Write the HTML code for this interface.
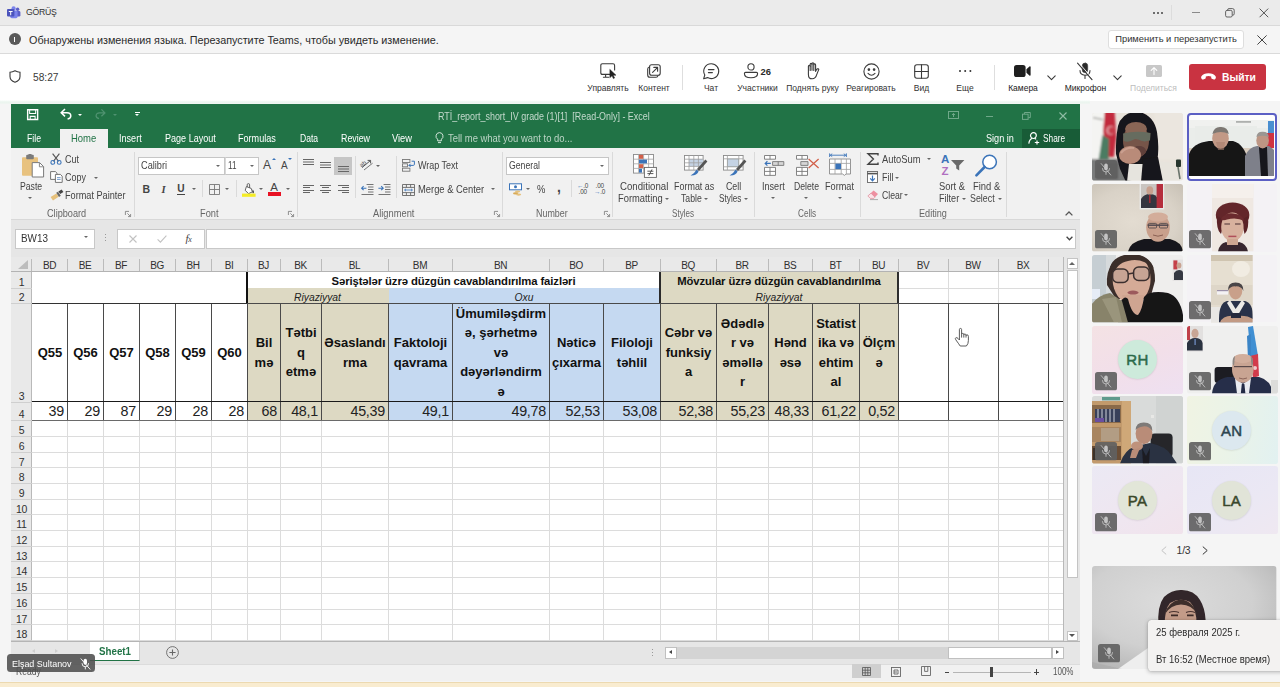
<!DOCTYPE html>
<html><head><meta charset="utf-8">
<style>
*{box-sizing:border-box;margin:0;padding:0}
html,body{width:1280px;height:687px;overflow:hidden;background:#f5f5f5;font-family:"Liberation Sans",sans-serif;}
.a{position:absolute}
svg{display:block;overflow:visible}
/* grid text */
.ch{font-size:10px;color:#303030;text-align:center;line-height:14px;letter-spacing:-0.35px}
.rh{font-size:10.5px;color:#303030;text-align:center;line-height:14px;letter-spacing:-0.3px}
.t1{font-size:11.3px;font-weight:bold;color:#111;text-align:center;line-height:15px;white-space:nowrap;letter-spacing:-0.1px}
.t2{font-size:10.3px;font-style:italic;color:#222;text-align:center;line-height:14px;white-space:nowrap}
.h3{display:flex;align-items:center;justify-content:center;text-align:center;font-weight:bold;font-size:13px;line-height:19.5px;color:#111;white-space:nowrap;overflow:hidden}
.v4{font-size:14.3px;letter-spacing:-0.25px;color:#222;text-align:right;line-height:17px;white-space:nowrap}
</style></head><body>
<div class="a" style="left:0;top:0;width:1280px;height:26px;background:#ebebeb;border-bottom:1px solid #d9d9d9"></div>
<div class="a" style="left:0;top:26px;width:1280px;height:28px;background:#f5f5f5;border-bottom:1px solid #dadada"></div>
<div class="a" style="left:0;top:54px;width:1280px;height:47px;background:#fff"></div>
<div class="a" style="left:0;top:101px;width:1280px;height:586px;background:#f5f5f5"></div>
<div class="a" style="left:0;top:100px;width:1090px;height:4px;background:linear-gradient(#fff,#eaf4ee 50%,#f1f5f2)"></div>
<!-- title bar -->
<svg class="a" style="left:7px;top:6px" width="14" height="13" viewBox="0 0 14 13">
 <circle cx="10.6" cy="3.2" r="1.7" fill="#5b5fc7"/><rect x="8.4" y="5" width="5" height="5.6" rx="1.4" fill="#5b5fc7"/>
 <circle cx="6.6" cy="2.4" r="2.1" fill="#7b83eb"/><rect x="3.2" y="4.6" width="7.4" height="7.6" rx="1.6" fill="#7b83eb"/>
 <rect x="0" y="3" width="7.4" height="7.6" rx="1" fill="#4b53bc"/>
 <path d="M1.8 5H5.6V6H4.2V9.2H3.2V6H1.8Z" fill="#fff"/>
</svg>
<div class="a" style="left:26px;top:7px;font-size:8.7px;color:#333;line-height:11px;letter-spacing:-0.25px;white-space:nowrap">GÖRÜŞ</div>
<div class="a" style="left:1153px;top:11.5px;width:2px;height:2px;border-radius:1px;background:#444;box-shadow:4px 0 #444,8px 0 #444"></div>
<div class="a" style="left:1171px;top:5px;width:1px;height:15px;background:#dcdcdc"></div>
<div class="a" style="left:1192px;top:11.5px;width:8px;height:1px;background:#8a8a8a"></div>
<svg class="a" style="left:1225px;top:8px" width="10" height="10" viewBox="0 0 10 10" fill="none" stroke="#555" stroke-width="0.9"><rect x="0.6" y="2.4" width="6.6" height="6.6" rx="1.4"/><path d="M2.6 2.4V2Q2.6 .6 4 .6H7.6Q9.2 .6 9.2 2.2V5.8Q9.2 7.2 7.8 7.2H7.2"/></svg>
<svg class="a" style="left:1259px;top:8px" width="10" height="10" viewBox="0 0 10 10" stroke="#444" stroke-width="0.9"><path d="M.6 .6L9.2 9.2M9.2 .6L.6 9.2"/></svg>
<!-- notification bar -->
<div class="a" style="left:8.6px;top:33.3px;width:12.2px;height:12.2px;border-radius:50%;background:#5a5a5a"></div>
<div class="a" style="left:14.2px;top:36.6px;width:1.1px;height:5.8px;background:#fff"></div>
<div class="a" style="left:29px;top:33px;font-size:10.8px;color:#2b2b2b;line-height:14px;white-space:nowrap">Обнаружены изменения языка. Перезапустите Teams, чтобы увидеть изменение.</div>
<div class="a" style="left:1108px;top:30px;width:136px;height:19px;background:#fff;border:1px solid #dedede;border-radius:3px;font-size:9.35px;color:#333;text-align:center;line-height:17px;white-space:nowrap">Применить и перезапустить</div>
<svg class="a" style="left:1257px;top:35px" width="10" height="10" viewBox="0 0 10 10" stroke="#444" stroke-width="1"><path d="M.4 .4L9.6 9.6M9.6 .4L.4 9.6"/></svg>
<!-- meeting toolbar -->
<svg class="a" style="left:9px;top:70px" width="12" height="13" viewBox="0 0 12 13" fill="none" stroke="#3a3a3a" stroke-width="1.1"><path d="M6 .8Q3.6 2.2 1 2.2V6.4Q1 10.4 6 12.2Q11 10.4 11 6.4V2.2Q8.4 2.2 6 .8Z"/></svg>
<div class="a" style="left:33px;top:70.8px;font-size:10.2px;color:#3a3a3a;line-height:13px;white-space:nowrap">58:27</div>
<style>.tl{position:absolute;top:83.2px;width:80px;margin-left:-40px;text-align:center;font-size:8.5px;line-height:11px;color:#333;white-space:nowrap}
.ti{position:absolute;fill:none;stroke:#3a3a3a;stroke-width:1.1;stroke-linecap:round;stroke-linejoin:round}</style>
<div class="tl" style="left:608px">Управлять</div>
<div class="tl" style="left:654px">Контент</div>
<div class="tl" style="left:711px">Чат</div>
<div class="tl" style="left:757.5px">Участники</div>
<div class="tl" style="left:812.5px">Поднять руку</div>
<div class="tl" style="left:871px">Реагировать</div>
<div class="tl" style="left:921.5px">Вид</div>
<div class="tl" style="left:965px">Еще</div>
<div class="tl" style="left:1023px;color:#222">Камера</div>
<div class="tl" style="left:1085.5px;color:#222">Микрофон</div>
<div class="tl" style="left:1153.5px;color:#bdbdbd">Поделиться</div>
<div class="a" style="left:682px;top:65px;width:1px;height:25px;background:#dedede"></div>
<div class="a" style="left:994px;top:65px;width:1px;height:25px;background:#dedede"></div>
<!-- manage: monitor + cursor -->
<svg class="ti" style="left:600px;top:63px" width="17" height="16" viewBox="0 0 17 16"><path d="M9.6 11.4H2.4Q.8 11.4 .8 9.8V2.4Q.8 .8 2.4 .8H13Q14.6 .8 14.6 2.4V7"/><path d="M5.6 11.6V14M3.4 14.2H8.6"/><path d="M10 6.6L16 12.2H13.2L14.6 15L13.4 15.6L12 12.8L10 14.6Z" fill="#222" stroke="#222" stroke-width=".5"/></svg>
<!-- content -->
<svg class="ti" style="left:647px;top:64px" width="14" height="14" viewBox="0 0 14 14"><rect x="2.6" y=".7" width="10.6" height="10.6" rx="2"/><path d="M2.4 3Q.7 3.4 .7 5V11Q.7 13.3 3 13.3H9Q10.6 13.3 11 11.6"/><path d="M5.6 8.4L10.4 3.6M6.8 3.4H10.6V7.2"/></svg>
<!-- chat -->
<svg class="ti" style="left:702px;top:63px" width="18" height="17" viewBox="0 0 18 17"><path d="M9.2 .8A7.4 7.4 0 1 1 5.6 14.6L1.6 15.8L2.8 12A7.4 7.4 0 0 1 9.2 .8Z"/><path d="M6.4 6.6H12M6.4 9.6H10.4"/></svg>
<!-- people -->
<svg class="ti" style="left:743px;top:63px" width="16" height="16" viewBox="0 0 16 16"><circle cx="8" cy="3.9" r="3.1"/><path d="M2.6 9.4H13.4Q14.6 9.4 14.6 10.6Q14.6 14.8 8 14.8Q1.4 14.8 1.4 10.6Q1.4 9.4 2.6 9.4Z"/></svg>
<div class="a" style="left:760.5px;top:65.5px;font-size:9.4px;font-weight:bold;color:#2a2a2a;line-height:11px">26</div>
<!-- hand -->
<svg class="ti" style="left:805px;top:62px" width="15" height="18" viewBox="0 0 15 18"><path d="M3.4 10.6V4.2Q3.4 3.2 4.3 3.2Q5.2 3.2 5.2 4.2V2.2Q5.2 1.2 6.1 1.2Q7 1.2 7 2.2V1.8Q7 .8 7.9 .8Q8.8 .8 8.8 1.8V2.8Q8.8 1.9 9.7 1.9Q10.6 1.9 10.6 2.9V9.4Q11.2 7.6 12.4 6.8Q13.6 6.4 13.8 7.4L11.8 12.4Q10.6 16.8 7.2 16.8Q3.4 16.8 3.4 12.4Z"/><path d="M5.2 4V8.4M7 2V8.2M8.8 2.8V8.4"/></svg>
<!-- smiley -->
<svg class="ti" style="left:862.5px;top:63px" width="17" height="17" viewBox="0 0 17 17"><circle cx="8.5" cy="8.5" r="7.6"/><circle cx="5.9" cy="6.6" r=".8" fill="#3a3a3a"/><circle cx="11.1" cy="6.6" r=".8" fill="#3a3a3a"/><path d="M5 10.4Q8.5 14 12 10.4"/></svg>
<!-- view grid -->
<svg class="ti" style="left:914px;top:64px" width="15" height="15" viewBox="0 0 15 15"><rect x=".7" y=".7" width="13.6" height="13.6" rx="2.2"/><path d="M7.5 .8V14.2M.8 7.5H14.2"/></svg>
<!-- more -->
<div class="a" style="left:958.5px;top:69.5px;width:2.4px;height:2.4px;border-radius:50%;background:#333;box-shadow:5.2px 0 #333,10.4px 0 #333"></div>
<!-- camera -->
<svg class="a" style="left:1014px;top:65px" width="17" height="12" viewBox="0 0 17 12"><rect x="0" y="0" width="11.6" height="12" rx="2.6" fill="#1f1f1f"/><path d="M12.4 4.2L15.4 1.6Q16.6 .9 16.6 2.2V9.8Q16.6 11.1 15.4 10.4L12.4 7.8Z" fill="#1f1f1f"/></svg>
<svg class="ti" style="left:1046.5px;top:74.5px" width="9" height="6" viewBox="0 0 9 6" stroke-width="1"><path d="M.8 .8L4.5 4.6L8.2 .8"/></svg>
<!-- mic muted -->
<svg class="ti" style="left:1076px;top:62px" width="18" height="19" viewBox="0 0 18 19" stroke="#2a2a2a"><rect x="6.3" y="1" width="5.4" height="9.6" rx="2.7" fill="#2a2a2a" stroke-width=".6"/><path d="M4 8.6Q4 13.2 9 13.2Q14 13.2 14 8.6M9 13.4V16.4"/><path d="M1.6 1.2L16 17.6" stroke-width="1.2"/><path d="M2.6 .6L17 17" stroke="#fff" stroke-width=".9"/></svg>
<svg class="ti" style="left:1113px;top:74.5px" width="9" height="6" viewBox="0 0 9 6" stroke-width="1"><path d="M.8 .8L4.5 4.6L8.2 .8"/></svg>
<!-- share disabled -->
<svg class="a" style="left:1145.5px;top:65px" width="16" height="12" viewBox="0 0 16 12"><rect width="16" height="12" rx="1.6" fill="#c8c8c8"/><path d="M8 9.6V3M5.2 5.4L8 2.6L10.8 5.4" fill="none" stroke="#fff" stroke-width="1.1" stroke-linecap="round" stroke-linejoin="round"/></svg>
<!-- leave -->
<div class="a" style="left:1188.5px;top:64px;width:77px;height:26px;border-radius:3px;background:#c93341"></div>
<svg class="a" style="left:1201px;top:73px" width="15" height="7" viewBox="0 0 15 7"><path d="M7.5 .3Q12.6 .3 14.6 3.2Q15.2 4.4 14.6 5.4L14 6.2Q13.6 6.7 12.8 6.4L10.8 5.7Q10.2 5.4 10.2 4.6V3.5Q7.5 2.7 4.8 3.5V4.6Q4.8 5.4 4.2 5.7L2.2 6.4Q1.4 6.7 1 6.2L.4 5.4Q-.2 4.4 .4 3.2Q2.4 .3 7.5 .3Z" fill="#fff"/></svg>
<div class="a" style="left:1222px;top:70.5px;font-size:10.3px;font-weight:bold;color:#fff;line-height:13px;white-space:nowrap">Выйти</div>
<style>.rt{line-height:13px;white-space:pre;transform-origin:0 50%}
.sep{position:absolute;width:1px;background:#dadada}
.dd{position:absolute;width:0;height:0;border-left:2.4px solid transparent;border-right:2.4px solid transparent;border-top:2.6px solid #666}
.ln{position:absolute;width:6px;height:6px}
.xi{position:absolute;overflow:visible}
</style>
<div class="a" style="left:11px;top:104px;width:1069px;height:44px;background:#217346"></div>
<div class="a" style="left:60px;top:129px;width:48px;height:19px;background:#f1f1f1"></div>
<div class="a" style="left:1022px;top:129px;width:58px;height:19px;background:#185c37"></div>
<div class="a" style="left:11px;top:148px;width:1069px;height:72px;background:#f1f1f1;border-bottom:1px solid #d8d8d8"></div>
<div class="a" style="left:11px;top:220px;width:1069px;height:37px;background:#e6e6e6"></div>
<!-- quick access -->
<svg class="xi" style="left:26.7px;top:108.8px" width="11.3" height="11.2" viewBox="0 0 12 11" preserveAspectRatio="none" fill="none" stroke="#fff" stroke-width="1.5"><path d="M.7 .7H11.3V10.3H.7Z"/><path d="M2.8 .8V4.4H9.2V.8M3.4 10V7.2H8.6V10" stroke-width="1.1"/></svg>
<svg class="xi" style="left:60px;top:107.8px" width="12" height="12" viewBox="0 0 12 12" fill="none" stroke="#fff" stroke-width="1.5"><path d="M5 1L1.2 4.8L5 8.4M1.6 4.8H7Q10.8 4.8 10.8 8Q10.8 10.4 7.6 11"/></svg>
<div class="dd" style="left:78px;top:114px;border-top-color:#fff"></div>
<svg class="xi" style="left:95px;top:107.8px" width="11" height="12" viewBox="0 0 12 12" fill="none" stroke="#4f9270" stroke-width="1.4"><path d="M7 1L10.8 4.8L7 8.4M10.4 4.8H5Q1.2 4.8 1.2 8Q1.2 10.4 4.4 11"/></svg>
<div class="dd" style="left:112.5px;top:114px;border-top-color:#4f9270"></div>
<div class="a" style="left:134.5px;top:111.5px;width:5px;height:1.2px;background:#fff"></div>
<div class="dd" style="left:134.6px;top:114.4px;border-top-color:#fff"></div>
<!-- lightbulb -->
<svg class="xi" style="left:435px;top:132px" width="9" height="12" viewBox="0 0 9 12" fill="none" stroke="#d5e6dc" stroke-width="1"><path d="M4.5 .6A3.6 3.6 0 0 1 6.4 7.2V8.8H2.6V7.2A3.6 3.6 0 0 1 4.5 .6ZM3 10.6H6"/></svg>
<!-- window controls -->
<svg class="xi" style="left:948px;top:111px" width="11" height="8" viewBox="0 0 11 8" fill="none" stroke="#6fa889" stroke-width="1"><rect x=".5" y=".5" width="10" height="7"/><path d="M5.5 6V2.6M4 4L5.5 2.4L7 4"/></svg>
<div class="a" style="left:986px;top:116px;width:7px;height:1px;background:#6fa889"></div>
<svg class="xi" style="left:1022px;top:111.5px" width="9" height="8" viewBox="0 0 9 8" fill="none" stroke="#6fa889" stroke-width="1"><rect x=".5" y="2.2" width="5.6" height="5.2"/><path d="M2.4 2V.5H8.3V5.6H6.4"/></svg>
<svg class="xi" style="left:1058.5px;top:112px" width="8" height="8" viewBox="0 0 8 8" stroke="#8fbda5" stroke-width="1.1"><path d="M.5 .5L7.5 7.5M7.5 .5L.5 7.5"/></svg>
<!-- share icon -->
<svg class="xi" style="left:1027.5px;top:132px" width="12" height="13" viewBox="0 0 12 13" fill="none" stroke="#fff" stroke-width="1.2"><circle cx="5.4" cy="3.6" r="2.9"/><path d="M.8 11.6Q1.4 7.4 4.2 6.4M6.6 6.4Q7.6 6.8 8 7.4M9 8.4V12.6M6.8 10.5H11.2"/></svg>
<!-- group separators -->
<div class="sep" style="left:134px;top:152px;height:65px"></div>
<div class="sep" style="left:297px;top:152px;height:65px"></div>
<div class="sep" style="left:502px;top:152px;height:65px"></div>
<div class="sep" style="left:612px;top:152px;height:65px"></div>
<div class="sep" style="left:754px;top:152px;height:65px"></div>
<div class="sep" style="left:860px;top:152px;height:65px"></div>
<div class="sep" style="left:1006px;top:152px;height:65px"></div>
<div class="sep" style="left:202px;top:180px;height:17px"></div>
<div class="sep" style="left:236px;top:180px;height:17px"></div>
<div class="sep" style="left:355px;top:156px;height:42px"></div>
<div class="sep" style="left:396px;top:156px;height:42px"></div>
<div class="sep" style="left:571px;top:180px;height:17px"></div>
<!-- CLIPBOARD -->
<svg class="xi" style="left:20.5px;top:154px" width="24" height="24" viewBox="0 0 24 24">
 <rect x="1" y="3.2" width="16" height="18.6" rx="1" fill="#e8c27f"/><rect x="5.2" y=".8" width="7.6" height="4.4" rx="1" fill="#7b7b7b"/><rect x="7.2" y="0" width="3.6" height="2" rx="1" fill="#7b7b7b"/>
 <path d="M11.2 8.6H18.6L22.6 12.6V23H11.2Z" fill="#fff" stroke="#7a7a7a" stroke-width="1"/><path d="M18.4 8.8V12.8H22.4" fill="none" stroke="#7a7a7a" stroke-width=".9"/>
</svg>
<div class="dd" style="left:28px;top:197px"></div>
<svg class="xi" style="left:50px;top:153px" width="12" height="12" viewBox="0 0 12 12" fill="none" stroke-width="1.1"><path d="M2.6 .6L8.6 8.4M9.4 .6L3.4 8.4" stroke="#555"/><circle cx="2.8" cy="9.4" r="1.9" stroke="#3b74b9"/><circle cx="9.2" cy="9.4" r="1.9" stroke="#3b74b9"/></svg>
<svg class="xi" style="left:49.5px;top:171px" width="13" height="12" viewBox="0 0 13 12" fill="#fff" stroke="#666" stroke-width=".9"><path d="M.6 .6H5.4L7 2.2V8.4H.6Z"/><path d="M5.4 3.4H10.4L12.2 5.2V11.4H5.4Z"/><path d="M7 6.6H10.6M7 8.4H10.6" stroke="#3b74b9" stroke-width=".7"/></svg>
<div class="dd" style="left:94px;top:176.5px"></div>
<svg class="xi" style="left:50px;top:189px" width="14" height="12" viewBox="0 0 14 12"><path d="M.6 8L6.4 4.4L8.6 7.8L3 11.6Z" fill="#e6c17c"/><path d="M6.2 3.8L8 2.8L10.8 6.8L9 8Z" fill="#666"/><path d="M8.4 2.4L11.6 .4L13.4 3L10.2 5Z" fill="#444"/></svg>
<svg class="ln" style="left:125px;top:211px" viewBox="0 0 6 6" fill="none" stroke="#777" stroke-width=".8"><path d="M.4 4V.4H4M2.4 2.4L5.4 5.4M5.6 3V5.6H3"/></svg>
<!-- FONT -->
<div class="a" style="left:138px;top:156.5px;width:87px;height:18px;background:#fff;border:1px solid #c6c6c6"></div>
<div class="a" style="left:225px;top:156.5px;width:34px;height:18px;background:#fff;border:1px solid #c6c6c6;border-left:1px solid #d8d8d8"></div>
<div class="dd" style="left:216px;top:164.5px"></div><div class="dd" style="left:250px;top:164.5px"></div>
<div class="a" style="left:263px;top:157.5px;font-size:12px;color:#444;line-height:14px">A</div><div class="a" style="left:271.5px;top:158px;width:0;height:0;border-left:2px solid transparent;border-right:2px solid transparent;border-bottom:2.6px solid #3b74b9"></div>
<div class="a" style="left:281px;top:159.5px;font-size:10px;color:#444;line-height:12px">A</div><div class="a" style="left:288px;top:158px;width:0;height:0;border-left:2px solid transparent;border-right:2px solid transparent;border-top:2.6px solid #3b74b9"></div>
<div class="a" style="left:142.5px;top:182.5px;font-size:10.5px;font-weight:bold;color:#444;line-height:13px">B</div>
<div class="a" style="left:161.5px;top:182.5px;font-size:10.5px;font-weight:bold;font-style:italic;font-family:'Liberation Serif',serif;color:#444;line-height:13px">I</div>
<div class="a" style="left:177.2px;top:182.3px;font-size:10.2px;font-weight:bold;color:#444;line-height:13px;border-bottom:1px solid #444;height:12.4px">U</div>
<div class="dd" style="left:191.6px;top:188px"></div>
<svg class="xi" style="left:209px;top:183.5px" width="11" height="11" viewBox="0 0 11 11" fill="none" stroke="#777" stroke-width=".9"><path d="M.5 .5H10.5V10.5H.5ZM5.5 .5V10.5M.5 5.5H10.5"/></svg>
<div class="dd" style="left:225.2px;top:188px"></div>
<svg class="xi" style="left:241.5px;top:182.5px" width="14" height="14" viewBox="0 0 14 14"><path d="M4.4 3.6L9.2 5.4L10.4 8.8L6.6 10.6L3.2 7.4Z" fill="#fff" stroke="#555" stroke-width=".9"/><path d="M5.2 4V1.8Q5.2 .6 6.4 .6Q7.6 .6 7.6 1.8V4.8" fill="none" stroke="#555" stroke-width=".9"/><path d="M10.8 6.6Q12.6 8.6 12 9.8Q11.2 10.8 10.4 9.8Q10 8.6 10.8 6.6Z" fill="#555"/><rect x="0" y="10.6" width="13.6" height="3.2" fill="#f4ec25"/></svg>
<div class="dd" style="left:258.6px;top:188px"></div>
<div class="a" style="left:270.2px;top:180.5px;font-size:11.5px;color:#444;line-height:13px">A</div><div class="a" style="left:268.3px;top:192.4px;width:13px;height:3.2px;background:#e81123"></div>
<div class="dd" style="left:285.6px;top:188px"></div>
<svg class="ln" style="left:287.5px;top:211px" viewBox="0 0 6 6" fill="none" stroke="#777" stroke-width=".8"><path d="M.4 4V.4H4M2.4 2.4L5.4 5.4M5.6 3V5.6H3"/></svg>
<!-- ALIGNMENT -->
<style>.al{position:absolute;width:11px;height:1px;background:#666}</style>
<div class="al" style="left:303px;top:158.5px;box-shadow:0 2.5px #666,0 5px #666"></div>
<div class="al" style="left:320px;top:161.5px;box-shadow:0 2.5px #666,0 5px #666"></div>
<div class="a" style="left:334px;top:156.5px;width:18px;height:18px;background:#c6c6c6"></div>
<div class="al" style="left:337.5px;top:165.5px;box-shadow:0 2.5px #666,0 5px #666"></div>
<div class="al" style="left:303px;top:184.5px;box-shadow:0 5px #666"></div><div class="al" style="left:303px;top:187px;width:7px;box-shadow:0 5px #666"></div>
<div class="al" style="left:320px;top:184.5px;box-shadow:0 5px #666"></div><div class="al" style="left:322px;top:187px;width:7px;box-shadow:0 5px #666"></div>
<div class="al" style="left:337.5px;top:184.5px;box-shadow:0 5px #666"></div><div class="al" style="left:341.5px;top:187px;width:7px;box-shadow:0 5px #666"></div>
<svg class="xi" style="left:361px;top:158.5px" width="13" height="12" viewBox="0 0 13 12" fill="none" stroke="#555" stroke-width="1"><path d="M1 8.6L9.4 1.6M9.6 1.4V4.4M9.6 1.4H6.6" /><text x="-.5" y="6.4" font-size="6" font-family="Liberation Sans" fill="#555" stroke="none" transform="rotate(-40 3 6)">ab</text><path d="M3 11L11.6 4.2" stroke="#777"/></svg>
<div class="dd" style="left:376.2px;top:164.5px"></div>
<svg class="xi" style="left:361px;top:183.5px" width="13" height="11" viewBox="0 0 13 11" fill="none"><path d="M5.6 .5H12.5M7 3H12.5M7 5.5H12.5M7 8H12.5M.5 10.5H12.5" stroke="#666" stroke-width=".9"/><path d="M5.4 4.2H.8M2.6 2.2L.6 4.2L2.6 6.2" stroke="#3b74b9" stroke-width="1.1"/></svg>
<svg class="xi" style="left:378.4px;top:183.5px" width="13" height="11" viewBox="0 0 13 11" fill="none"><path d="M5.6 .5H12.5M7 3H12.5M7 5.5H12.5M7 8H12.5M.5 10.5H12.5" stroke="#666" stroke-width=".9"/><path d="M.4 4.2H5M3.2 2.2L5.2 4.2L3.2 6.2" stroke="#3b74b9" stroke-width="1.1"/></svg>
<svg class="xi" style="left:402px;top:158.5px" width="13" height="13" viewBox="0 0 13 13" fill="none" stroke="#777" stroke-width=".9"><rect x=".5" y=".5" width="7.4" height="3"/><rect x=".5" y="4.8" width="5" height="3"/><rect x=".5" y="9.2" width="7.4" height="3"/><path d="M6.8 6.4H11.4Q12.4 6.4 12.4 5.2V2.2H9.6M7 6.4L8.6 4.8M7 6.4L8.6 8" stroke="#3b74b9" stroke-width="1"/></svg>
<svg class="xi" style="left:402px;top:183.5px" width="13" height="12" viewBox="0 0 13 12" fill="none" stroke="#666" stroke-width=".9"><path d="M.5 .5H12.5V11.5H.5ZM.5 3.4H12.5M.5 8.6H12.5M4.4 .5V3.4M8.6 .5V3.4M4.4 8.6V11.5M8.6 8.6V11.5"/><path d="M2.6 6H10.4M4 4.8L2.6 6L4 7.2M9 4.8L10.4 6L9 7.2" stroke="#3b74b9" stroke-width=".8"/></svg>
<div class="dd" style="left:491px;top:188px"></div>
<svg class="ln" style="left:493.5px;top:211px" viewBox="0 0 6 6" fill="none" stroke="#777" stroke-width=".8"><path d="M.4 4V.4H4M2.4 2.4L5.4 5.4M5.6 3V5.6H3"/></svg>
<!-- NUMBER -->
<div class="a" style="left:506px;top:156.5px;width:103px;height:18px;background:#fff;border:1px solid #c6c6c6"></div>
<div class="dd" style="left:600.2px;top:164.5px"></div>
<svg class="xi" style="left:508.5px;top:182.5px" width="13" height="13" viewBox="0 0 13 13"><rect x=".5" y=".8" width="12" height="6" fill="#fff" stroke="#3b74b9" stroke-width="1"/><circle cx="6.5" cy="3.8" r="1.5" fill="#3b74b9"/><ellipse cx="8.6" cy="8.6" rx="2.6" ry="1.1" fill="#e6c17c"/><ellipse cx="6.6" cy="10.4" rx="2.6" ry="1.1" fill="#d9ab57"/><ellipse cx="9.6" cy="11.6" rx="2.6" ry="1.1" fill="#e6c17c"/></svg>
<div class="dd" style="left:525.6px;top:188px"></div>
<div class="a" style="left:537px;top:182px;font-size:11.5px;color:#444;line-height:14px;transform:scaleX(.82);transform-origin:0 0">%</div>
<div class="a" style="left:557px;top:179.5px;font-size:14px;font-weight:bold;color:#444;line-height:14px">,</div>
<div class="a" style="left:577px;top:183px;font-size:6.4px;color:#444;line-height:6px;white-space:pre;letter-spacing:-.2px"><span style="color:#3b74b9">←</span>.0<br> .00</div>
<div class="a" style="left:594px;top:183px;font-size:6.4px;color:#444;line-height:6px;white-space:pre;letter-spacing:-.2px"> .00<br><span style="color:#3b74b9">→</span>.0</div>
<svg class="ln" style="left:603.5px;top:211px" viewBox="0 0 6 6" fill="none" stroke="#777" stroke-width=".8"><path d="M.4 4V.4H4M2.4 2.4L5.4 5.4M5.6 3V5.6H3"/></svg>
<!-- STYLES -->
<svg class="xi" style="left:633px;top:154px" width="24" height="24" viewBox="0 0 24 24"><rect x=".5" y=".5" width="20" height="18.6" fill="#fff" stroke="#8a8a8a" stroke-width=".9"/><path d="M5.6 .5V19M10.6 .5V19M15.6 .5V19M.5 5.2H20.5M.5 9.8H20.5M.5 14.4H20.5" stroke="#a5a5a5" stroke-width=".8"/><rect x="6" y=".8" width="4.2" height="4" fill="#d2604a"/><rect x="6" y="5.6" width="8" height="3.8" fill="#3b74b9"/><rect x="6" y="10.2" width="4.2" height="3.8" fill="#d2604a"/><rect x="6" y="14.8" width="3" height="3.8" fill="#3b74b9"/><rect x="11.4" y="13.4" width="12" height="10" fill="#fff" stroke="#666" stroke-width=".9"/><path d="M14.4 17.2H20.4M14.4 19.6H20.4M19 15.4L15.8 21.6" stroke="#444" stroke-width=".9"/></svg>
<div class="dd" style="left:665px;top:197.5px"></div>
<svg class="xi" style="left:684px;top:155px" width="24" height="22" viewBox="0 0 24 22"><rect x=".5" y=".5" width="18.6" height="14.6" fill="#fff" stroke="#8a8a8a" stroke-width=".9"/><rect x="5" y="4" width="14" height="7.4" fill="#c5d3e4"/><path d="M5 .5V15M9.8 .5V15M14.4 .5V15M.5 4.2H19M.5 7.8H19M.5 11.4H19" stroke="#a0a0a0" stroke-width=".8"/><path d="M21.4 4.4L23.4 6.6L15 16L13 14Z" fill="#555"/><path d="M12.6 14.4L14.6 16.4Q12.6 20.8 6.6 20.4Q10.4 18.6 12.6 14.4Z" fill="#3b74b9"/></svg>
<div class="dd" style="left:704.2px;top:197.5px"></div>
<svg class="xi" style="left:723px;top:155px" width="24" height="22" viewBox="0 0 24 22"><rect x=".5" y=".5" width="19.6" height="14.6" fill="#fff" stroke="#8a8a8a" stroke-width=".9"/><rect x="4.6" y="4" width="11" height="7.6" fill="#c5d3e4" stroke="#9aa" stroke-width=".6"/><path d="M4.4 .5V15M15.8 .5V15M.5 3.8H20M.5 11.8H20" stroke="#a0a0a0" stroke-width=".8"/><path d="M21.4 4.4L23.4 6.6L15 16L13 14Z" fill="#555"/><path d="M12.6 14.4L14.6 16.4Q12.6 20.8 6.6 20.4Q10.4 18.6 12.6 14.4Z" fill="#3b74b9"/></svg>
<div class="dd" style="left:744px;top:197.5px"></div>
<!-- CELLS -->
<svg class="xi" style="left:763.5px;top:154.5px" width="21" height="21" viewBox="0 0 21 21" fill="#fff" stroke="#777" stroke-width=".9"><path d="M.5 .5H11.5V4.2H.5ZM6 .5V4.2"/><path d="M8.6 6.6H19.8V10.4H8.6ZM14.2 6.6V10.4" fill="#d6d6d6"/><path d="M.5 12.4H11.5V20.4H.5ZM6 12.4V20.4M.5 16.4H11.5"/><path d="M6.8 8.4H1.4M3.4 6.2L1.2 8.4L3.4 10.6" fill="none" stroke="#3b74b9" stroke-width="1.2"/></svg>
<div class="dd" style="left:771px;top:197px"></div>
<svg class="xi" style="left:795.5px;top:154.5px" width="24" height="21" viewBox="0 0 24 21" fill="#fff" stroke="#777" stroke-width=".9"><path d="M.5 .5H11.5V4.2H.5ZM6 .5V4.2"/><path d="M4.8 6.6H12V10.4H4.8Z" fill="#d6d6d6"/><path d="M.5 12.4H11.5V20.4H.5ZM6 12.4V20.4M.5 16.4H11.5"/><path d="M12.6 4L22.6 13M22.6 4L12.6 13" fill="none" stroke="#d2604a" stroke-width="1.3"/></svg>
<div class="dd" style="left:804.2px;top:197px"></div>
<svg class="xi" style="left:829px;top:153px" width="22" height="24" viewBox="0 0 22 24" fill="none"><path d="M.6 .4V4M17.4 .4V4M1.4 2.2H16.6M3.2 .8L1.2 2.2L3.2 3.6M14.8 .8L16.8 2.2L14.8 3.6" stroke="#3b74b9" stroke-width=".9"/><path d="M.5 6H21.5V21H17L15.4 22.4L13.6 21H.5Z" fill="#fff" stroke="#8a8a8a" stroke-width=".9"/><path d="M6 6V21M12.2 6V21M17.4 6V21M.5 10.4H21.5M.5 16.4H21.5" stroke="#a0a0a0" stroke-width=".8"/><rect x="6.4" y="10.6" width="5.6" height="5.6" fill="#3b74b9"/></svg>
<div class="dd" style="left:837.8px;top:197px"></div>
<!-- EDITING -->
<svg class="xi" style="left:866.5px;top:152.5px" width="12" height="12" viewBox="0 0 12 12" fill="none" stroke="#444" stroke-width="1.4"><path d="M11 2.6V.8H1L6.4 6L1 11.2H11V9.4"/></svg>
<div class="dd" style="left:927.4px;top:158.4px"></div>
<svg class="xi" style="left:867px;top:171px" width="11" height="12" viewBox="0 0 11 12" fill="#fff" stroke="#666" stroke-width=".9"><rect x=".5" y=".5" width="10" height="11"/><path d="M.5 2.6H10.5" stroke-width="1.6" stroke="#555"/><path d="M5.5 4.4V9.6M3.2 7.4L5.5 9.8L7.8 7.4" fill="none" stroke="#3b74b9" stroke-width="1.2"/></svg>
<div class="dd" style="left:895px;top:176.5px"></div>
<svg class="xi" style="left:867px;top:189.5px" width="12" height="10" viewBox="0 0 12 10"><path d="M6.6 .4L11 4L6.8 8.4H3.4L.8 6Z" fill="#ee8fa0"/><path d="M.8 6L3.4 8.4H6.8L8 7.2L4 3.2Z" fill="#fbe3e7" stroke="#d47c8c" stroke-width=".5"/><path d="M3 9.6H11" stroke="#999" stroke-width=".8"/></svg>
<div class="dd" style="left:904.2px;top:194px"></div>
<svg class="xi" style="left:940.5px;top:154px" width="24" height="22" viewBox="0 0 24 22"><text x="0" y="9.4" font-family="Liberation Sans" font-size="11.5" font-weight="bold" fill="#3b74b9">A</text><text x=".6" y="20.6" font-family="Liberation Sans" font-size="11.5" font-weight="bold" fill="#b06fc0">Z</text><path d="M10 6H23.4L18.2 11.6V16.4L15.2 14.6V11.6Z" fill="#6a6a6a"/></svg>
<div class="dd" style="left:962.4px;top:197.5px"></div>
<svg class="xi" style="left:974.5px;top:153.5px" width="23" height="23" viewBox="0 0 23 23" fill="none"><circle cx="14.6" cy="8" r="6.8" fill="#fff" stroke="#3b74b9" stroke-width="1.5"/><path d="M9.6 13L1.4 21.4" stroke="#3b74b9" stroke-width="2.6" stroke-linecap="round"/></svg>
<div class="dd" style="left:997.8px;top:197.5px"></div>
<svg class="xi" style="left:1065px;top:211px" width="8" height="5" viewBox="0 0 8 5" fill="none" stroke="#555" stroke-width="1.3"><path d="M.6 4.4L4 1L7.4 4.4"/></svg>
<!-- FORMULA BAR -->
<div class="a" style="left:15px;top:228.5px;width:80px;height:20px;background:#fff;border:1px solid #c8c8c8"></div>
<div class="dd" style="left:83.5px;top:236.4px"></div>
<div class="a" style="left:104.8px;top:234px;width:1px;height:1px;background:#999;box-shadow:0 3px #999,0 6px #999"></div>
<div class="a" style="left:117px;top:228.5px;width:88px;height:20px;background:#fff;border:1px solid #c8c8c8"></div>
<svg class="xi" style="left:129px;top:234.5px" width="8" height="8" viewBox="0 0 8 8" stroke="#c2c2c2" stroke-width="1.1"><path d="M.5 .5L7.5 7.5M7.5 .5L.5 7.5"/></svg>
<svg class="xi" style="left:156.5px;top:234.5px" width="10" height="8" viewBox="0 0 10 8" fill="none" stroke="#c2c2c2" stroke-width="1.1"><path d="M.6 4.4L3.4 7.2L9.4 .6"/></svg>
<div class="a" style="left:185.5px;top:231.5px;font-family:'Liberation Serif',serif;font-style:italic;font-size:11px;color:#444;line-height:13px;letter-spacing:-.3px">f<span style="font-size:8px">x</span></div>
<div class="a" style="left:206px;top:228.5px;width:870px;height:20px;background:#fff;border:1px solid #c8c8c8"></div>
<svg class="xi" style="left:1066px;top:236px" width="7" height="5" viewBox="0 0 7 5" fill="none" stroke="#444" stroke-width="1.3"><path d="M.6 .8L3.5 3.8L6.4 .8"/></svg>
<div class="a " style="left:11px;top:251px;width:1069px;height:21px;background:#e6e6e6"></div>
<div class="a " style="left:11px;top:257px;width:1053px;height:15px;background:#e9e9e9;border-bottom:1px solid #b3b3b3"></div>
<div class="a " style="left:32px;top:272px;width:1032px;height:369px;background:#fff"></div>
<div class="a " style="left:11px;top:272px;width:21px;height:369px;background:#e9e9e9;border-right:1px solid #b9b9b9"></div>
<div class="a ch" style="left:32px;top:259px;width:35px;height:14px;">BD</div>
<div class="a " style="left:67px;top:259px;width:1px;height:12px;background:#bbb"></div>
<div class="a ch" style="left:67px;top:259px;width:36px;height:14px;">BE</div>
<div class="a " style="left:103px;top:259px;width:1px;height:12px;background:#bbb"></div>
<div class="a ch" style="left:103px;top:259px;width:36px;height:14px;">BF</div>
<div class="a " style="left:139px;top:259px;width:1px;height:12px;background:#bbb"></div>
<div class="a ch" style="left:139px;top:259px;width:36px;height:14px;">BG</div>
<div class="a " style="left:175px;top:259px;width:1px;height:12px;background:#bbb"></div>
<div class="a ch" style="left:175px;top:259px;width:36px;height:14px;">BH</div>
<div class="a " style="left:211px;top:259px;width:1px;height:12px;background:#bbb"></div>
<div class="a ch" style="left:211px;top:259px;width:36px;height:14px;">BI</div>
<div class="a " style="left:247px;top:259px;width:1px;height:12px;background:#bbb"></div>
<div class="a ch" style="left:247px;top:259px;width:33px;height:14px;">BJ</div>
<div class="a " style="left:280px;top:259px;width:1px;height:12px;background:#bbb"></div>
<div class="a ch" style="left:280px;top:259px;width:41px;height:14px;">BK</div>
<div class="a " style="left:321px;top:259px;width:1px;height:12px;background:#bbb"></div>
<div class="a ch" style="left:321px;top:259px;width:67px;height:14px;">BL</div>
<div class="a " style="left:388px;top:259px;width:1px;height:12px;background:#bbb"></div>
<div class="a ch" style="left:388px;top:259px;width:64px;height:14px;">BM</div>
<div class="a " style="left:452px;top:259px;width:1px;height:12px;background:#bbb"></div>
<div class="a ch" style="left:452px;top:259px;width:97px;height:14px;">BN</div>
<div class="a " style="left:549px;top:259px;width:1px;height:12px;background:#bbb"></div>
<div class="a ch" style="left:549px;top:259px;width:54px;height:14px;">BO</div>
<div class="a " style="left:603px;top:259px;width:1px;height:12px;background:#bbb"></div>
<div class="a ch" style="left:603px;top:259px;width:57px;height:14px;">BP</div>
<div class="a " style="left:660px;top:259px;width:1px;height:12px;background:#bbb"></div>
<div class="a ch" style="left:660px;top:259px;width:56px;height:14px;">BQ</div>
<div class="a " style="left:716px;top:259px;width:1px;height:12px;background:#bbb"></div>
<div class="a ch" style="left:716px;top:259px;width:52px;height:14px;">BR</div>
<div class="a " style="left:768px;top:259px;width:1px;height:12px;background:#bbb"></div>
<div class="a ch" style="left:768px;top:259px;width:44px;height:14px;">BS</div>
<div class="a " style="left:812px;top:259px;width:1px;height:12px;background:#bbb"></div>
<div class="a ch" style="left:812px;top:259px;width:47px;height:14px;">BT</div>
<div class="a " style="left:859px;top:259px;width:1px;height:12px;background:#bbb"></div>
<div class="a ch" style="left:859px;top:259px;width:39px;height:14px;">BU</div>
<div class="a " style="left:898px;top:259px;width:1px;height:12px;background:#bbb"></div>
<div class="a ch" style="left:898px;top:259px;width:50px;height:14px;">BV</div>
<div class="a " style="left:948px;top:259px;width:1px;height:12px;background:#bbb"></div>
<div class="a ch" style="left:948px;top:259px;width:50px;height:14px;">BW</div>
<div class="a " style="left:998px;top:259px;width:1px;height:12px;background:#bbb"></div>
<div class="a ch" style="left:998px;top:259px;width:50px;height:14px;">BX</div>
<div class="a " style="left:1048px;top:259px;width:1px;height:12px;background:#bbb"></div>
<div class="a " style="left:1064px;top:259px;width:1px;height:12px;background:#bbb"></div>
<div class="a " style="left:31px;top:259px;width:1px;height:12px;background:#bbb"></div>
<svg class="a" style="left:18px;top:260px" width="11" height="10"><path d="M10 0V9H0Z" fill="#bdbdbd"/></svg>
<div class="a rh" style="left:11px;top:274.8px;width:21px;height:14px;">1</div>
<div class="a " style="left:11px;top:287.5px;width:21px;height:1px;background:#cfcfcf"></div>
<div class="a rh" style="left:11px;top:289.8px;width:21px;height:14px;">2</div>
<div class="a " style="left:11px;top:302.5px;width:21px;height:1px;background:#cfcfcf"></div>
<div class="a rh" style="left:11px;top:388.8px;width:21px;height:14px;">3</div>
<div class="a " style="left:11px;top:401.5px;width:21px;height:1px;background:#cfcfcf"></div>
<div class="a rh" style="left:11px;top:406.8px;width:21px;height:14px;">4</div>
<div class="a " style="left:11px;top:419.5px;width:21px;height:1px;background:#cfcfcf"></div>
<div class="a rh" style="left:11px;top:423.1px;width:21px;height:14px;">5</div>
<div class="a " style="left:11px;top:435.8px;width:21px;height:1px;background:#cfcfcf"></div>
<div class="a rh" style="left:11px;top:438.8px;width:21px;height:14px;">6</div>
<div class="a " style="left:11px;top:451.5px;width:21px;height:1px;background:#cfcfcf"></div>
<div class="a rh" style="left:11px;top:454.5px;width:21px;height:14px;">7</div>
<div class="a " style="left:11px;top:467.2px;width:21px;height:1px;background:#cfcfcf"></div>
<div class="a rh" style="left:11px;top:470.2px;width:21px;height:14px;">8</div>
<div class="a " style="left:11px;top:482.9px;width:21px;height:1px;background:#cfcfcf"></div>
<div class="a rh" style="left:11px;top:485.9px;width:21px;height:14px;">9</div>
<div class="a " style="left:11px;top:498.6px;width:21px;height:1px;background:#cfcfcf"></div>
<div class="a rh" style="left:11px;top:501.6px;width:21px;height:14px;">10</div>
<div class="a " style="left:11px;top:514.3px;width:21px;height:1px;background:#cfcfcf"></div>
<div class="a rh" style="left:11px;top:517.3px;width:21px;height:14px;">11</div>
<div class="a " style="left:11px;top:530.0px;width:21px;height:1px;background:#cfcfcf"></div>
<div class="a rh" style="left:11px;top:533.0px;width:21px;height:14px;">12</div>
<div class="a " style="left:11px;top:545.7px;width:21px;height:1px;background:#cfcfcf"></div>
<div class="a rh" style="left:11px;top:548.7px;width:21px;height:14px;">13</div>
<div class="a " style="left:11px;top:561.4px;width:21px;height:1px;background:#cfcfcf"></div>
<div class="a rh" style="left:11px;top:564.4px;width:21px;height:14px;">14</div>
<div class="a " style="left:11px;top:577.1px;width:21px;height:1px;background:#cfcfcf"></div>
<div class="a rh" style="left:11px;top:580.1px;width:21px;height:14px;">15</div>
<div class="a " style="left:11px;top:592.8px;width:21px;height:1px;background:#cfcfcf"></div>
<div class="a rh" style="left:11px;top:595.8px;width:21px;height:14px;">16</div>
<div class="a " style="left:11px;top:608.5px;width:21px;height:1px;background:#cfcfcf"></div>
<div class="a rh" style="left:11px;top:611.5px;width:21px;height:14px;">17</div>
<div class="a " style="left:11px;top:624.2px;width:21px;height:1px;background:#cfcfcf"></div>
<div class="a rh" style="left:11px;top:627.2px;width:21px;height:14px;">18</div>
<div class="a " style="left:11px;top:639.9px;width:21px;height:1px;background:#cfcfcf"></div>
<div class="a " style="left:32px;top:435.8px;width:1032px;height:1px;background:#dcdcdc"></div>
<div class="a " style="left:32px;top:451.5px;width:1032px;height:1px;background:#dcdcdc"></div>
<div class="a " style="left:32px;top:467.2px;width:1032px;height:1px;background:#dcdcdc"></div>
<div class="a " style="left:32px;top:482.9px;width:1032px;height:1px;background:#dcdcdc"></div>
<div class="a " style="left:32px;top:498.6px;width:1032px;height:1px;background:#dcdcdc"></div>
<div class="a " style="left:32px;top:514.3px;width:1032px;height:1px;background:#dcdcdc"></div>
<div class="a " style="left:32px;top:530.0px;width:1032px;height:1px;background:#dcdcdc"></div>
<div class="a " style="left:32px;top:545.7px;width:1032px;height:1px;background:#dcdcdc"></div>
<div class="a " style="left:32px;top:561.4px;width:1032px;height:1px;background:#dcdcdc"></div>
<div class="a " style="left:32px;top:577.1px;width:1032px;height:1px;background:#dcdcdc"></div>
<div class="a " style="left:32px;top:592.8px;width:1032px;height:1px;background:#dcdcdc"></div>
<div class="a " style="left:32px;top:608.5px;width:1032px;height:1px;background:#dcdcdc"></div>
<div class="a " style="left:32px;top:624.2px;width:1032px;height:1px;background:#dcdcdc"></div>
<div class="a " style="left:32px;top:639.9px;width:1032px;height:1px;background:#dcdcdc"></div>
<div class="a " style="left:67px;top:421px;width:1px;height:220px;background:#dcdcdc"></div>
<div class="a " style="left:103px;top:421px;width:1px;height:220px;background:#dcdcdc"></div>
<div class="a " style="left:139px;top:421px;width:1px;height:220px;background:#dcdcdc"></div>
<div class="a " style="left:175px;top:421px;width:1px;height:220px;background:#dcdcdc"></div>
<div class="a " style="left:211px;top:421px;width:1px;height:220px;background:#dcdcdc"></div>
<div class="a " style="left:247px;top:421px;width:1px;height:220px;background:#dcdcdc"></div>
<div class="a " style="left:280px;top:421px;width:1px;height:220px;background:#dcdcdc"></div>
<div class="a " style="left:321px;top:421px;width:1px;height:220px;background:#dcdcdc"></div>
<div class="a " style="left:388px;top:421px;width:1px;height:220px;background:#dcdcdc"></div>
<div class="a " style="left:452px;top:421px;width:1px;height:220px;background:#dcdcdc"></div>
<div class="a " style="left:549px;top:421px;width:1px;height:220px;background:#dcdcdc"></div>
<div class="a " style="left:603px;top:421px;width:1px;height:220px;background:#dcdcdc"></div>
<div class="a " style="left:660px;top:421px;width:1px;height:220px;background:#dcdcdc"></div>
<div class="a " style="left:716px;top:421px;width:1px;height:220px;background:#dcdcdc"></div>
<div class="a " style="left:768px;top:421px;width:1px;height:220px;background:#dcdcdc"></div>
<div class="a " style="left:812px;top:421px;width:1px;height:220px;background:#dcdcdc"></div>
<div class="a " style="left:859px;top:421px;width:1px;height:220px;background:#dcdcdc"></div>
<div class="a " style="left:898px;top:421px;width:1px;height:220px;background:#dcdcdc"></div>
<div class="a " style="left:948px;top:421px;width:1px;height:220px;background:#dcdcdc"></div>
<div class="a " style="left:998px;top:421px;width:1px;height:220px;background:#dcdcdc"></div>
<div class="a " style="left:1048px;top:421px;width:1px;height:220px;background:#dcdcdc"></div>
<div class="a " style="left:1064px;top:421px;width:1px;height:220px;background:#dcdcdc"></div>
<div class="a " style="left:948px;top:272px;width:1px;height:31px;background:#dcdcdc"></div>
<div class="a " style="left:998px;top:272px;width:1px;height:31px;background:#dcdcdc"></div>
<div class="a " style="left:1048px;top:272px;width:1px;height:31px;background:#dcdcdc"></div>
<div class="a " style="left:1064px;top:272px;width:1px;height:31px;background:#dcdcdc"></div>
<div class="a " style="left:898px;top:287.5px;width:166px;height:1px;background:#dcdcdc"></div>
<div class="a " style="left:248px;top:288px;width:141px;height:15px;background:#ddd9c3"></div>
<div class="a " style="left:389px;top:288px;width:272px;height:15px;background:#c5d9f1"></div>
<div class="a " style="left:248px;top:303px;width:141px;height:117px;background:#ddd9c3"></div>
<div class="a " style="left:389px;top:303px;width:272px;height:117px;background:#c5d9f1"></div>
<div class="a " style="left:661px;top:272px;width:238px;height:148px;background:#ddd9c3"></div>
<div class="a " style="left:67px;top:303px;width:1px;height:118px;background:#4a4a4a"></div>
<div class="a " style="left:103px;top:303px;width:1px;height:118px;background:#4a4a4a"></div>
<div class="a " style="left:139px;top:303px;width:1px;height:118px;background:#4a4a4a"></div>
<div class="a " style="left:175px;top:303px;width:1px;height:118px;background:#4a4a4a"></div>
<div class="a " style="left:211px;top:303px;width:1px;height:118px;background:#4a4a4a"></div>
<div class="a " style="left:247px;top:303px;width:1px;height:118px;background:#4a4a4a"></div>
<div class="a " style="left:280px;top:303px;width:1px;height:118px;background:#4a4a4a"></div>
<div class="a " style="left:321px;top:303px;width:1px;height:118px;background:#4a4a4a"></div>
<div class="a " style="left:388px;top:303px;width:1px;height:118px;background:#4a4a4a"></div>
<div class="a " style="left:452px;top:303px;width:1px;height:118px;background:#4a4a4a"></div>
<div class="a " style="left:549px;top:303px;width:1px;height:118px;background:#4a4a4a"></div>
<div class="a " style="left:603px;top:303px;width:1px;height:118px;background:#4a4a4a"></div>
<div class="a " style="left:660px;top:303px;width:1px;height:118px;background:#4a4a4a"></div>
<div class="a " style="left:716px;top:303px;width:1px;height:118px;background:#4a4a4a"></div>
<div class="a " style="left:768px;top:303px;width:1px;height:118px;background:#4a4a4a"></div>
<div class="a " style="left:812px;top:303px;width:1px;height:118px;background:#4a4a4a"></div>
<div class="a " style="left:859px;top:303px;width:1px;height:118px;background:#4a4a4a"></div>
<div class="a " style="left:898px;top:303px;width:1px;height:118px;background:#4a4a4a"></div>
<div class="a " style="left:948px;top:303px;width:1px;height:118px;background:#4a4a4a"></div>
<div class="a " style="left:998px;top:303px;width:1px;height:118px;background:#4a4a4a"></div>
<div class="a " style="left:1048px;top:303px;width:1px;height:118px;background:#4a4a4a"></div>
<div class="a " style="left:32px;top:302.5px;width:1032px;height:1.4px;background:#4a4a4a"></div>
<div class="a " style="left:32px;top:401px;width:1032px;height:1px;background:#1a1a1a"></div>
<div class="a " style="left:32px;top:420.3px;width:1032px;height:1.2px;background:#6a6a6a"></div>
<div class="a " style="left:246px;top:272px;width:2px;height:31px;background:#111"></div>
<div class="a " style="left:659px;top:272px;width:2px;height:31px;background:#2a2a2a"></div>
<div class="a " style="left:897px;top:272px;width:2px;height:31px;background:#2e2e2e"></div>
<div class="a " style="left:32px;top:302.5px;width:215px;height:1.5px;background:#333"></div>
<div class="a t1" style="left:247px;top:274px;width:413px;height:15px;">Səriştələr üzrə düzgün cavablandırılma faizləri</div>
<div class="a t1" style="left:660px;top:274px;width:238px;height:15px;">Mövzular üzrə düzgün cavablandırılma</div>
<div class="a t2" style="left:247px;top:290.5px;width:141px;height:14px;">Riyaziyyat</div>
<div class="a t2" style="left:388px;top:290.5px;width:272px;height:14px;">Oxu</div>
<div class="a t2" style="left:660px;top:290.5px;width:238px;height:14px;">Riyaziyyat</div>
<div class="a h3" style="left:33px;top:304px;width:34px;height:97px"><span>Q55</span></div>
<div class="a v4" style="left:32px;top:403px;width:32px;height:17px">39</div>
<div class="a h3" style="left:68px;top:304px;width:35px;height:97px"><span>Q56</span></div>
<div class="a v4" style="left:67px;top:403px;width:33px;height:17px">29</div>
<div class="a h3" style="left:104px;top:304px;width:35px;height:97px"><span>Q57</span></div>
<div class="a v4" style="left:103px;top:403px;width:33px;height:17px">87</div>
<div class="a h3" style="left:140px;top:304px;width:35px;height:97px"><span>Q58</span></div>
<div class="a v4" style="left:139px;top:403px;width:33px;height:17px">29</div>
<div class="a h3" style="left:176px;top:304px;width:35px;height:97px"><span>Q59</span></div>
<div class="a v4" style="left:175px;top:403px;width:33px;height:17px">28</div>
<div class="a h3" style="left:212px;top:304px;width:35px;height:97px"><span>Q60</span></div>
<div class="a v4" style="left:211px;top:403px;width:33px;height:17px">28</div>
<div class="a h3" style="left:248px;top:304px;width:32px;height:97px"><span>Bil<br>mə</span></div>
<div class="a v4" style="left:247px;top:403px;width:30px;height:17px">68</div>
<div class="a h3" style="left:281px;top:304px;width:40px;height:97px"><span>Tətbi<br>q<br>etmə</span></div>
<div class="a v4" style="left:280px;top:403px;width:38px;height:17px">48,1</div>
<div class="a h3" style="left:322px;top:304px;width:66px;height:97px"><span>Əsaslandı<br>rma</span></div>
<div class="a v4" style="left:321px;top:403px;width:64px;height:17px">45,39</div>
<div class="a h3" style="left:389px;top:304px;width:63px;height:97px"><span>Faktoloji<br>qavrama</span></div>
<div class="a v4" style="left:388px;top:403px;width:61px;height:17px">49,1</div>
<div class="a h3" style="left:453px;top:304px;width:96px;height:97px"><span>Ümumiləşdirm<br>ə, şərhetmə<br>və<br>dəyərləndirm<br>ə</span></div>
<div class="a v4" style="left:452px;top:403px;width:94px;height:17px">49,78</div>
<div class="a h3" style="left:550px;top:304px;width:53px;height:97px"><span>Nəticə<br>çıxarma</span></div>
<div class="a v4" style="left:549px;top:403px;width:51px;height:17px">52,53</div>
<div class="a h3" style="left:604px;top:304px;width:56px;height:97px"><span>Filoloji<br>təhlil</span></div>
<div class="a v4" style="left:603px;top:403px;width:54px;height:17px">53,08</div>
<div class="a h3" style="left:661px;top:304px;width:55px;height:97px"><span>Cəbr və<br>funksiy<br>a</span></div>
<div class="a v4" style="left:660px;top:403px;width:53px;height:17px">52,38</div>
<div class="a h3" style="left:717px;top:304px;width:51px;height:97px"><span>Ədədlə<br>r və<br>əməllə<br>r</span></div>
<div class="a v4" style="left:716px;top:403px;width:49px;height:17px">55,23</div>
<div class="a h3" style="left:769px;top:304px;width:43px;height:97px"><span>Hənd<br>əsə</span></div>
<div class="a v4" style="left:768px;top:403px;width:41px;height:17px">48,33</div>
<div class="a h3" style="left:813px;top:304px;width:46px;height:97px"><span>Statist<br>ika və<br>ehtim<br>al</span></div>
<div class="a v4" style="left:812px;top:403px;width:44px;height:17px">61,22</div>
<div class="a h3" style="left:860px;top:304px;width:38px;height:97px"><span>Ölçm<br>ə</span></div>
<div class="a v4" style="left:859px;top:403px;width:36px;height:17px">0,52</div>
<!-- vertical scrollbar -->
<div class="a" style="left:1063px;top:251px;width:17px;height:390px;background:#e6e6e6"></div><div class="a" style="left:1063px;top:257px;width:1px;height:384px;background:#b9b9b9"></div>
<div class="a" style="left:1066.5px;top:258px;width:11px;height:11px;background:#fff;border:1px solid #c4c4c4"></div>
<div class="a" style="left:1068.6px;top:261.6px;width:0;height:0;border-left:3.4px solid transparent;border-right:3.4px solid transparent;border-bottom:3.6px solid #666"></div>
<div class="a" style="left:1066.5px;top:270px;width:11px;height:308px;background:#fff;border:1px solid #c4c4c4"></div>
<div class="a" style="left:1066.5px;top:630.5px;width:11px;height:10.5px;background:#fff;border:1px solid #c4c4c4"></div>
<div class="a" style="left:1068.6px;top:634.2px;width:0;height:0;border-left:3.4px solid transparent;border-right:3.4px solid transparent;border-top:3.6px solid #555"></div>
<!-- tab bar -->
<div class="a" style="left:11px;top:641px;width:1069px;height:23px;background:#e6e6e6;border-top:1px solid #b5b5b5"></div>
<div class="a" style="left:32px;top:649px;width:0;height:0;border-top:2.6px solid transparent;border-bottom:2.6px solid transparent;border-right:3px solid #cfcfcf"></div>
<div class="a" style="left:54.5px;top:649px;width:0;height:0;border-top:2.6px solid transparent;border-bottom:2.6px solid transparent;border-left:3px solid #cfcfcf"></div>
<div class="a" style="left:90px;top:641.5px;width:50px;height:19.5px;background:#fff;border-bottom:1.6px solid #217346;border-right:1px solid #cfcfcf"></div>
<svg class="xi" style="left:165.8px;top:645.8px" width="13" height="13" viewBox="0 0 13 13" fill="none" stroke="#666" stroke-width=".9"><circle cx="6.5" cy="6.5" r="5.9"/><path d="M6.5 3.4V9.6M3.4 6.5H9.6" stroke-width="1.1"/></svg>
<div class="a" style="left:652.2px;top:648.6px;width:1px;height:1px;background:#999;box-shadow:0 3px #999,0 6px #999"></div>
<div class="a" style="left:665px;top:647px;width:399px;height:11.5px;background:#d4d4d4"></div>
<div class="a" style="left:665px;top:647px;width:11.5px;height:11.5px;background:#fff;border:1px solid #c0c0c0"></div>
<div class="a" style="left:668.5px;top:650.2px;width:0;height:0;border-top:2.6px solid transparent;border-bottom:2.6px solid transparent;border-right:3px solid #444"></div>
<div class="a" style="left:948px;top:647px;width:104px;height:11.5px;background:#fff;border:1px solid #c0c0c0"></div>
<div class="a" style="left:1051.5px;top:647px;width:12px;height:11.5px;background:#fff;border:1px solid #c0c0c0"></div>
<div class="a" style="left:1056px;top:650.2px;width:0;height:0;border-top:2.6px solid transparent;border-bottom:2.6px solid transparent;border-left:3px solid #444"></div>
<!-- status bar -->
<div class="a" style="left:11px;top:664px;width:1069px;height:17px;background:#f1f1f1;border-top:1px solid #dcdcdc"></div>
<div class="a" style="left:852px;top:664px;width:29px;height:14px;background:#cfcfcf"></div>
<svg class="xi" style="left:861.5px;top:667px" width="9" height="9" viewBox="0 0 9 9" fill="none" stroke="#555" stroke-width=".8"><path d="M.5 .5H8.5V8.5H.5ZM3.2 .5V8.5M5.8 .5V8.5M.5 3.2H8.5M.5 5.8H8.5"/></svg>
<svg class="xi" style="left:891px;top:666.5px" width="10" height="10" viewBox="0 0 10 10" fill="none" stroke="#666" stroke-width=".9"><rect x=".5" y=".5" width="9" height="9"/><path d="M3 3H7V7H3ZM3 5H6"/></svg>
<svg class="xi" style="left:921px;top:666px" width="10" height="10" viewBox="0 0 10 10" fill="none" stroke="#666" stroke-width=".9"><path d="M.5 .5H9.5V9.5H.5ZM3.6 .5V5.4H6.8V.5"/></svg>
<div class="a" style="left:944.5px;top:671.5px;width:4px;height:1.3px;background:#444"></div>
<div class="a" style="left:953px;top:671.6px;width:78px;height:1px;background:#b5b5b5"></div>
<div class="a" style="left:990.4px;top:667.4px;width:2.6px;height:9.4px;background:#444"></div>
<div class="a" style="left:1033.8px;top:671.5px;width:5.6px;height:1.3px;background:#444"></div><div class="a" style="left:1036px;top:669.4px;width:1.3px;height:5.6px;background:#444"></div>
<div class="a rt" style="left:27.0px;top:132.0px;font-size:10.30px;transform:scaleX(0.844);color:#fff;">File</div>
<div class="a rt" style="left:71.2px;top:132.0px;font-size:10.30px;transform:scaleX(0.921);color:#217346;">Home</div>
<div class="a rt" style="left:119.2px;top:132.0px;font-size:10.30px;transform:scaleX(0.881);color:#fff;">Insert</div>
<div class="a rt" style="left:164.5px;top:132.0px;font-size:10.30px;transform:scaleX(0.878);color:#fff;">Page Layout</div>
<div class="a rt" style="left:238.4px;top:132.0px;font-size:10.30px;transform:scaleX(0.881);color:#fff;">Formulas</div>
<div class="a rt" style="left:299.5px;top:132.0px;font-size:10.30px;transform:scaleX(0.832);color:#fff;">Data</div>
<div class="a rt" style="left:340.7px;top:132.0px;font-size:10.30px;transform:scaleX(0.859);color:#fff;">Review</div>
<div class="a rt" style="left:392.0px;top:132.0px;font-size:10.30px;transform:scaleX(0.899);color:#fff;">View</div>
<div class="a rt" style="left:448.1px;top:132.0px;font-size:10.30px;transform:scaleX(0.917);color:#bcd5c6;">Tell me what you want to do...</div>
<div class="a rt" style="left:438.4px;top:109.8px;font-size:10.30px;transform:scaleX(0.867);color:#c4dacd;">RTİ_report_short_IV grade (1)[1]  [Read-Only] - Excel</div>
<div class="a rt" style="left:986.2px;top:132.0px;font-size:10.30px;transform:scaleX(0.886);color:#fff;">Sign in</div>
<div class="a rt" style="left:1042.9px;top:132.0px;font-size:10.30px;transform:scaleX(0.808);color:#fff;">Share</div>
<div class="a rt" style="left:19.5px;top:179.5px;font-size:10.30px;transform:scaleX(0.843);color:#444;">Paste</div>
<div class="a rt" style="left:65.0px;top:152.9px;font-size:10.30px;transform:scaleX(0.873);color:#444;">Cut</div>
<div class="a rt" style="left:65.0px;top:171.2px;font-size:10.30px;transform:scaleX(0.869);color:#444;">Copy</div>
<div class="a rt" style="left:65.0px;top:188.7px;font-size:10.30px;transform:scaleX(0.888);color:#444;">Format Painter</div>
<div class="a rt" style="left:46.9px;top:206.8px;font-size:10.30px;transform:scaleX(0.889);color:#666;">Clipboard</div>
<div class="a rt" style="left:199.9px;top:206.8px;font-size:10.30px;transform:scaleX(0.898);color:#666;">Font</div>
<div class="a rt" style="left:372.7px;top:206.8px;font-size:10.30px;transform:scaleX(0.904);color:#666;">Alignment</div>
<div class="a rt" style="left:535.8px;top:206.8px;font-size:10.30px;transform:scaleX(0.865);color:#666;">Number</div>
<div class="a rt" style="left:671.7px;top:206.8px;font-size:10.30px;transform:scaleX(0.784);color:#666;">Styles</div>
<div class="a rt" style="left:797.9px;top:206.8px;font-size:10.30px;transform:scaleX(0.791);color:#666;">Cells</div>
<div class="a rt" style="left:919.4px;top:206.8px;font-size:10.30px;transform:scaleX(0.886);color:#666;">Editing</div>
<div class="a rt" style="left:140.7px;top:159.0px;font-size:10.30px;transform:scaleX(0.894);color:#444;">Calibri</div>
<div class="a rt" style="left:227.5px;top:159.0px;font-size:10.30px;transform:scaleX(0.786);color:#444;">11</div>
<div class="a rt" style="left:509.0px;top:159.0px;font-size:10.30px;transform:scaleX(0.843);color:#444;">General</div>
<div class="a rt" style="left:417.5px;top:159.2px;font-size:10.30px;transform:scaleX(0.872);color:#444;">Wrap Text</div>
<div class="a rt" style="left:417.5px;top:183.3px;font-size:10.30px;transform:scaleX(0.911);color:#444;">Merge &amp; Center</div>
<div class="a rt" style="left:620.0px;top:179.5px;font-size:10.30px;transform:scaleX(0.937);color:#444;">Conditional</div>
<div class="a rt" style="left:617.8px;top:192.0px;font-size:10.30px;transform:scaleX(0.908);color:#444;">Formatting</div>
<div class="a rt" style="left:674.4px;top:179.5px;font-size:10.30px;transform:scaleX(0.869);color:#444;">Format as</div>
<div class="a rt" style="left:680.8px;top:192.0px;font-size:10.30px;transform:scaleX(0.841);color:#444;">Table</div>
<div class="a rt" style="left:726.0px;top:179.5px;font-size:10.30px;transform:scaleX(0.857);color:#444;">Cell</div>
<div class="a rt" style="left:718.6px;top:192.0px;font-size:10.30px;transform:scaleX(0.799);color:#444;">Styles</div>
<div class="a rt" style="left:762.3px;top:179.5px;font-size:10.30px;transform:scaleX(0.881);color:#444;">Insert</div>
<div class="a rt" style="left:794.0px;top:179.5px;font-size:10.30px;transform:scaleX(0.840);color:#444;">Delete</div>
<div class="a rt" style="left:825.4px;top:179.5px;font-size:10.30px;transform:scaleX(0.889);color:#444;">Format</div>
<div class="a rt" style="left:881.6px;top:152.9px;font-size:10.30px;transform:scaleX(0.909);color:#444;">AutoSum</div>
<div class="a rt" style="left:881.6px;top:171.2px;font-size:10.30px;transform:scaleX(0.866);color:#444;">Fill</div>
<div class="a rt" style="left:881.6px;top:188.7px;font-size:10.30px;transform:scaleX(0.841);color:#444;">Clear</div>
<div class="a rt" style="left:939.3px;top:179.5px;font-size:10.30px;transform:scaleX(0.912);color:#444;">Sort &amp;</div>
<div class="a rt" style="left:939.3px;top:192.0px;font-size:10.30px;transform:scaleX(0.883);color:#444;">Filter</div>
<div class="a rt" style="left:972.6px;top:179.5px;font-size:10.30px;transform:scaleX(0.914);color:#444;">Find &amp;</div>
<div class="a rt" style="left:970.4px;top:192.0px;font-size:10.30px;transform:scaleX(0.859);color:#444;">Select</div>
<div class="a rt" style="left:20.5px;top:232.1px;font-size:10.30px;transform:scaleX(0.963);color:#333;">BW13</div>
<div class="a rt" style="left:98.6px;top:645.1px;font-size:10.30px;transform:scaleX(0.947);color:#217346;font-weight:bold;">Sheet1</div>
<div class="a rt" style="left:16.3px;top:665.1px;font-size:10.30px;transform:scaleX(0.830);color:#555;">Ready</div>
<div class="a rt" style="left:1052.5px;top:665.1px;font-size:10.30px;transform:scaleX(0.778);color:#555;">100%</div>
<!-- SIDE PANEL -->
<svg width="0" height="0" style="position:absolute"><defs>
<symbol id="mo" viewBox="0 0 22 18.5"><rect width="22" height="18.5" rx="2.6" fill="#616161" fill-opacity=".92"/><g fill="none" stroke="#c4c4c4" stroke-width=".85" stroke-linecap="round"><rect x="9.2" y="3.6" width="3.6" height="6.6" rx="1.8" fill="#c4c4c4" stroke="none"/><path d="M7.4 8.6Q7.4 12 11 12Q14.6 12 14.6 8.6M11 12.2V14.4"/><path d="M6.2 3.6L15.8 15"/></g></symbol>
<filter id="b1" x="-5%" y="-5%" width="110%" height="110%"><feGaussianBlur stdDeviation=".7"/></filter>
<filter id="b2" x="-5%" y="-5%" width="110%" height="110%"><feGaussianBlur stdDeviation="1.3"/></filter>
<clipPath id="cT"><rect width="91" height="67.6" rx="2.6"/></clipPath>
<clipPath id="cP"><rect width="41.6" height="67.6"/></clipPath>
</defs></svg>
<style>
.tile{position:absolute;width:91px;height:67.6px;border-radius:2.6px;overflow:hidden}
.av{position:absolute;width:39px;height:39px;border-radius:50%;text-align:center;line-height:39.6px;font-size:15px;font-weight:normal;-webkit-text-stroke:.5px currentColor;letter-spacing:.3px;box-shadow:0 .5px 2px rgba(0,0,0,.12)}
.av span{display:inline-block;transform:scaleX(1)}
.mb{position:absolute;width:22px;height:18.5px}
</style>
<!-- avatar tiles -->
<div class="tile" style="left:1091.5px;top:326px;background:linear-gradient(160deg,#f4e2e4,#f2dfe9 50%,#eee0f1)"></div>
<div class="av" style="left:1118px;top:340px;background:#cdeadb;color:#2c6a4a"><span>RH</span></div>
<div class="tile" style="left:1186.5px;top:396.1px;background:linear-gradient(100deg,#f0f3e3,#eaf3e8 50%,#e2f1f1)"></div>
<div class="av" style="left:1212.2px;top:410.8px;background:#dce8ef;color:#2d4650"><span>AN</span></div>
<div class="tile" style="left:1091.5px;top:466.4px;background:linear-gradient(150deg,#ebe9f4,#efe6f0 60%,#f1e3ec)"></div>
<div class="av" style="left:1118px;top:481px;background:#e2e6d8;color:#3a482a"><span>PA</span></div>
<div class="tile" style="left:1186.5px;top:466.4px;background:linear-gradient(150deg,#e7e6f5,#ebe8f4 60%,#efe8f1)"></div>
<div class="av" style="left:1212.2px;top:481px;background:#e1e4d8;color:#39472c"><span>LA</span></div>
<!-- pagination -->
<svg class="xi" style="left:1160.5px;top:545.5px" width="6" height="9" viewBox="0 0 6 9" fill="none" stroke="#c2c2c2" stroke-width="1"><path d="M5.2 .6L.8 4.5L5.2 8.4"/></svg>
<div class="a" style="left:1176.6px;top:543.5px;font-size:10.4px;color:#333;line-height:13px;letter-spacing:-.2px">1/3</div>
<svg class="xi" style="left:1202px;top:545.5px" width="6" height="9" viewBox="0 0 6 9" fill="none" stroke="#333" stroke-width="1"><path d="M.8 .6L5.2 4.5L.8 8.4"/></svg>
<!-- T1: woman, flag -->
<svg class="xi" style="left:1091.5px;top:113.3px" width="91" height="67.6" viewBox="0 0 91 67.6"><g clip-path="url(#cT)"><rect width="91" height="67.6" fill="#e8e3db"/>
<g filter="url(#b2)"><rect x="-3" y="-3" width="15" height="52" fill="#f4f4f2"/><rect x="62" y="-3" width="32" height="50" fill="#ebe6df"/>
<path d="M1 4.6L11 6.6" stroke="#9a9a96" stroke-width="1.2"/>
<path d="M12.8 -2H22.6L24.4 24L22 44H15.6L11 19Z" fill="#c22c3e"/><path d="M10.4 22L17 26L16.6 46L6.6 47Z" fill="#4b7c62"/><circle cx="18.6" cy="17.4" r="4.6" fill="#dc8f96"/><circle cx="20" cy="17.4" r="3.4" fill="#c83a4a"/>
<rect x="-2" y="46" width="40" height="24" fill="#7a7b7c"/><rect x="4" y="50" width="22" height="16" fill="#5a5a5a"/>
</g><g filter="url(#b1)">
<path d="M42 -1Q29 1 26 13Q23.6 26 24 41L28 56L34 69H71L65 49Q67.6 36 65 19Q62 3 48 -1Z" fill="#19161a"/>
<ellipse cx="44" cy="28" rx="13" ry="17" fill="#765549"/><ellipse cx="44" cy="16" rx="11" ry="7" fill="#8a6656"/>
<path d="M31 20.4Q44 17.4 58.6 20L58 27.6Q51 29.6 46 26.6Q43.4 25 41 27Q36 30 31.6 28Z" fill="#666c5f"/>
<ellipse cx="47" cy="38" rx="7" ry="5" fill="#5e3f3a"/>
<ellipse cx="38" cy="42" rx="11" ry="9" fill="#b98b79"/><path d="M29 40Q34 34 42 35" stroke="#caa090" stroke-width="2" fill="none"/>
<path d="M37 51H52L50 69H35Z" fill="#e6e4de"/><path d="M67 48L80 50L89 69H70Z" fill="#e7e4dd"/><path d="M51 46L66 44L71 69H49Z" fill="#17151a"/>
<rect x="84" y="46.6" width="5" height="7.4" rx="1" fill="#27352d"/><path d="M86 54L88 66" stroke="#6a746c" stroke-width="1.6"/></g></g></svg>
<!-- T2: active speaker frame -->
<div class="a" style="left:1186.5px;top:113.3px;width:90.6px;height:67.6px;border:2px solid #5b5fc4;border-radius:4px;background:#fdfdfd"></div>
<svg class="xi" style="left:1189.4px;top:119.8px" width="84.6" height="55.1" viewBox="0 0 84.6 55.1"><rect width="84.6" height="55.1" fill="#eaedea"/>
<g filter="url(#b1)"><rect x="0" y="0" width="84.6" height="8" fill="#f0f1ef"/><rect x="6" y="6" width="62" height="22" fill="#e9ece9"/><rect x="47" y="1" width="15" height="1.8" fill="#aeb0ae"/>
<rect x="0" y="30" width="84.6" height="26" fill="#b6774f"/><rect x="0" y="28" width="84.6" height="6" fill="#d9cdbf"/>
<rect x="79" y="1" width="6" height="13" fill="#4a8ed0"/><rect x="78" y="13" width="7" height="15" fill="#cf3040"/>
<path d="M0 34Q4 23 20 21H44Q55 24 59 40V56H0Z" fill="#131216"/>
<ellipse cx="31.5" cy="18.6" rx="8.3" ry="10.2" fill="#c29986"/><path d="M23.4 14Q25 6.6 31.5 7Q38.6 6.6 39.8 14Q32 10 23.4 14Z" fill="#7d7873"/><path d="M27 22H36L35 30H29Z" fill="#a87f6e" opacity=".6"/>
<path d="M56 56V36Q60 27 68 26H80L85 30V56Z" fill="#7e808a"/><path d="M70 27H78L79 56H72Z" fill="#15151a"/>
<ellipse cx="73.6" cy="20.4" rx="6.3" ry="8" fill="#bd9684"/><path d="M67.4 17Q68 11.6 73.6 11.8Q79.4 11.6 79.8 17Q73.6 14.4 67.4 17Z" fill="#9a9692"/></g></svg>
<!-- T3: bald man -->
<svg class="xi" style="left:1091.5px;top:184px" width="91" height="67.6" viewBox="0 0 91 67.6"><g clip-path="url(#cT)"><defs><radialGradient id="g3" cx=".45" cy=".55" r=".8"><stop offset="0" stop-color="#e3dcd1"/><stop offset=".6" stop-color="#d9d2c7"/><stop offset="1" stop-color="#c6bfb3"/></radialGradient></defs><rect width="91" height="67.6" fill="url(#g3)"/>
<g filter="url(#b1)"><rect x="47.6" y="-1" width="24.6" height="26.4" fill="#e9e9e8"/><rect x="49" y="0" width="22" height="24" fill="#c9c4c0"/><path d="M49 24V15Q52 10 58 10Q65 10 66 16V24Z" fill="#34363f"/><ellipse cx="57.8" cy="6.4" rx="3.4" ry="4.2" fill="#c8a08e"/><rect x="64.6" y="0" width="6.4" height="24" fill="#b52f3c"/><rect x="57" y="11" width="1.6" height="8" fill="#a02a34"/>
<path d="M36 67.6Q38 58 52 55H78Q90 58 91 67.6Z" fill="#18161a"/>
<ellipse cx="66" cy="43.4" rx="11.8" ry="14.4" fill="#c9a08c"/><ellipse cx="66" cy="33" rx="10" ry="4.6" fill="#d3ad9a"/>
<path d="M55.6 40.4H76.4V42H55.6Z" fill="#5a5054"/><rect x="56.4" y="39.4" width="8.2" height="4.6" rx="1" fill="none" stroke="#54494c" stroke-width=".9"/><rect x="67.4" y="39.4" width="8.2" height="4.6" rx="1" fill="none" stroke="#54494c" stroke-width=".9"/>
<path d="M61 51Q66 53.4 71 51" stroke="#8a5f52" stroke-width="1" fill="none"/></g></g></svg>
<!-- T4: woman red hair (portrait) -->
<div class="a" style="left:1186.5px;top:184px;width:90.6px;height:67.6px;background:#f4f2f5;border-radius:2.6px"></div>
<svg class="xi" style="left:1211.6px;top:184px" width="41.6" height="67.6" viewBox="0 0 41.6 67.6"><g clip-path="url(#cP)"><rect width="41.6" height="67.6" fill="#efe8e2"/><rect width="41.6" height="14" fill="#f5f0ec"/>
<g filter="url(#b1)"><ellipse cx="20.6" cy="31" rx="16.8" ry="12.6" fill="#63262a"/><path d="M5 32Q4 46 9 50L13 36ZM36 32Q37.4 46 32.6 50L29 36Z" fill="#5a2226"/>
<ellipse cx="20.4" cy="43" rx="11.2" ry="14.6" fill="#d8b19e"/><path d="M8.6 35Q14 27 24 30Q31 31 32.6 37Q24 32.6 15 35.6Q11 37 8.6 35Z" fill="#6b2a2d"/>
<path d="M12.4 40H18M23 40H28.6" stroke="#4a3030" stroke-width="1.2"/><path d="M16.4 52.4H24.4" stroke="#b0505a" stroke-width="1.5"/>
<path d="M6 67.6Q7 60 14 58L20.6 61L27 58Q35 60 36 67.6Z" fill="#38282e"/><rect x="15" y="55" width="11" height="6" fill="#cfa792"/></g></g></svg>
<!-- T5: woman with glasses -->
<svg class="xi" style="left:1091.5px;top:254.8px" width="91" height="67.6" viewBox="0 0 91 67.6"><g clip-path="url(#cT)"><rect width="91" height="67.6" fill="#efeeed"/>
<g filter="url(#b1)"><rect x="-2" y="-2" width="24" height="72" fill="#c6ced3"/><rect x="0" y="34" width="8" height="10" fill="#e6ecf6"/><rect x="14" y="-2" width="10" height="40" fill="#d6dadc"/>
<rect x="80.6" y="4.6" width="10.4" height="21.4" fill="#e4e2e2"/><rect x="81.4" y="5.4" width="4" height="9" fill="#c5404a"/><path d="M82 25V18Q84 15 87 15Q91 15 91 18V25Z" fill="#343842"/><ellipse cx="87" cy="10.6" rx="2.4" ry="3" fill="#c9a391"/>
<path d="M15 30Q13 4 38 -1Q64 0 63 26L58 44H24Z" fill="#3b2d29"/>
<ellipse cx="39.6" cy="24" rx="19" ry="25" fill="#d5ab97"/><path d="M18 12Q22 0 40 -1Q58 0 62 14Q50 2 36 6Q24 8 21 22Z" fill="#3b2d29"/>
<rect x="20.6" y="14" width="15.6" height="13.4" rx="5" fill="#c7a494" stroke="#3a2f2e" stroke-width="1.5"/><rect x="41.6" y="12" width="15.6" height="13.4" rx="5" fill="#c7a494" stroke="#3a2f2e" stroke-width="1.5"/><path d="M36 19L41.6 18" stroke="#3a2f2e" stroke-width="1.3"/>
<ellipse cx="41" cy="37.6" rx="5.6" ry="2" fill="#9c5a5c"/>
<path d="M30 40H52L50 62H34Z" fill="#cfa591"/><path d="M26 67.6L29 46Q33 40 36 44Q40 60 46 60Q50 56 52 42Q58 35 76 38Q88 42 91 60V67.6Z" fill="#161418"/>
<path d="M-1 67.6V50Q6 40 18 38L30 46L36 67.6Z" fill="#88836a"/><path d="M10 44L24 42L30 67.6H22Z" fill="#9a957c"/></g></g></svg>
<!-- T6: woman seated (portrait) -->
<div class="a" style="left:1186.5px;top:254.8px;width:90.6px;height:67.6px;background:#f4f2f5;border-radius:2.6px"></div>
<svg class="xi" style="left:1211.2px;top:254.8px" width="41.9" height="67.6" viewBox="0 0 41.9 67.6"><g clip-path="url(#cP)"><rect width="42" height="67.6" fill="#e4dccf"/>
<g filter="url(#b1)"><rect x="-1" y="-1" width="44" height="7" fill="#cfc4b0"/><rect x="-1" y="6" width="44" height="26" fill="#e6dfd1"/><ellipse cx="30" cy="14" rx="9" ry="8" fill="#f1ece2"/>
<rect x="-1" y="30" width="44" height="20" fill="#ded6c8"/><rect x="6" y="35" width="11" height="4.6" fill="#f4f2f4"/><rect x="6" y="35" width="11" height="1.2" fill="#9a8fa8"/>
<rect x="-1" y="52" width="14" height="17" fill="#e9e7e4"/>
<path d="M8 64Q8 48 16 46H34Q42 48 42 62V67.6H8Z" fill="#2b3348"/><path d="M19 45L24.6 54L31 45L34 48L27 60H23L16 48Z" fill="#eceae6"/>
<ellipse cx="24.6" cy="36.6" rx="6.6" ry="7.8" fill="#c9a08a"/><path d="M17 36Q16.6 27.6 24.6 27.6Q32.6 27.6 32.4 36Q30 31 24.6 31.4Q19 31 17 36Z" fill="#4a4446"/>
<path d="M9 67.6Q12 59.6 24 61Q36 59.6 42 64V67.6Z" fill="#c29a84"/><path d="M20 58H30V63H20Z" fill="#252b3c"/></g></g></svg>
<!-- T8: man at desk, flag -->
<svg class="xi" style="left:1186.5px;top:326px" width="90.6" height="67.6" viewBox="0 0 90.6 67.6"><g clip-path="url(#cT)"><rect width="91" height="67.6" fill="#efefee"/>
<g filter="url(#b1)"><rect x="-1" y="-1" width="17" height="26.6" fill="#e2e0df"/><rect x="0" y="0" width="3" height="14" fill="#c0404a"/><path d="M0 24.6V17Q3 12 8 12Q14.6 12 15.6 17V24.6Z" fill="#2b3040"/><ellipse cx="8" cy="7.4" rx="3.6" ry="4.6" fill="#c8a595"/><rect x="7.4" y="13" width="1.4" height="6" fill="#6a86b8"/>
<path d="M61 1L66 0L71 30L64 34Z" fill="#3f8fd2"/><path d="M63 30L71 28L72 50L66 52Z" fill="#d23a4c"/><path d="M60 10L64 8V34L61 34Z" fill="#3a84c6"/><circle cx="68" cy="42" r="2" fill="#f0c8cc"/>
<rect x="27.6" y="41" width="20" height="16" rx="3" fill="#1e1d20"/>
<path d="M25 67.6Q26 54 40 51H72Q84 54 86 67.6Z" fill="#262e48"/><path d="M48 52L56 58L64 52L62 67.6H50Z" fill="#e9ebf0"/><path d="M54.8 58H57.4L58.4 67.6H53.8Z" fill="#222a44"/>
<ellipse cx="55.8" cy="43" rx="10.8" ry="13.8" fill="#c9a492"/><ellipse cx="55.8" cy="32.6" rx="9.4" ry="4.6" fill="#d2ae9c"/><path d="M45.6 38Q45 32 48 30L47 40ZM66 38Q66.6 32 63.6 30L64.6 40Z" fill="#8e8884"/>
<path d="M47 40.6H65" stroke="#5a4a48" stroke-width="1.2"/><path d="M52 52Q56 54 60 52" stroke="#8c6458" stroke-width="1" fill="none"/><rect x="84" y="54" width="7" height="14" fill="#dcdcda"/></g></g></svg>
<!-- T9: man, bookshelf -->
<svg class="xi" style="left:1091.5px;top:396.1px" width="91" height="67.6" viewBox="0 0 91 67.6"><g clip-path="url(#cT)"><rect width="91" height="67.6" fill="#d9dbda"/>
<g filter="url(#b1)"><rect x="64" y="0" width="27" height="67.6" fill="#d0d3d2"/><rect x="10" y="1" width="18" height="3.4" fill="#5f9a8c"/>
<rect x="-1" y="5" width="40" height="63" fill="#c29a6c"/><rect x="30" y="5" width="9" height="63" fill="#cfa878"/>
<rect x="0" y="9" width="29" height="18" fill="#8a6a4a"/><rect x="3" y="13" width="25" height="13" fill="#39405a"/><path d="M6 13V26M10 13V26M14 13V26M18 13V26M22 13V26" stroke="#cfd2da" stroke-width="1"/><rect x="3" y="22" width="9" height="4" fill="#6a50a0"/>
<rect x="0" y="31" width="29" height="15" fill="#a88560"/><rect x="9" y="32" width="18" height="13" fill="#b29d84"/>
<rect x="0" y="50" width="29" height="14" fill="#6a4e36"/><rect x="1" y="52" width="18" height="12" fill="#3a322c"/>
<rect x="58.6" y="37.6" width="22" height="24" rx="4" fill="#25272b"/>
<path d="M28 67.6Q32 54 44 50L58 47Q74 50 80 60L85 67.6Z" fill="#2a3142"/><path d="M50 52L54 60L58 52L57 67.6H51Z" fill="#1b1d24"/>
<ellipse cx="52" cy="37.6" rx="8.4" ry="10.6" fill="#b98c78"/><path d="M43.6 34Q44 26.4 52 26.6Q60.6 26.6 60.4 35Q57 29.6 51 30.4Q46 31 43.6 34Z" fill="#7e7a78"/>
<ellipse cx="45" cy="50" rx="6" ry="4.6" fill="#bf927c"/><path d="M40 54L48 52L44 62L38 62Z" fill="#b98c78"/><rect x="59" y="19" width="3" height="3" fill="#e8e8e6"/></g></g></svg>
<!-- self view -->
<svg class="xi" style="left:1092.1px;top:566px" width="184.6" height="102.9" viewBox="0 0 184.6 102.9"><defs><clipPath id="cS"><rect width="184.6" height="102.9" rx="3"/></clipPath><radialGradient id="gS" cx=".42" cy=".35" r=".75"><stop offset="0" stop-color="#dcdcdc"/><stop offset=".6" stop-color="#d0d0d0"/><stop offset="1" stop-color="#b4b4b4"/></radialGradient></defs>
<g clip-path="url(#cS)"><rect width="184.6" height="102.9" fill="url(#gS)"/>
<g filter="url(#b1)"><path d="M66.5 60Q65 40 72 31Q80 23.4 90 24Q102 24 108 34Q113 42 113.6 54Q119 55.6 123.4 58.4V60Z" fill="#33272a"/>
<path d="M73 60Q72 44 78 37Q88 31 98 36Q105 43 104.6 60Z" fill="#c39b88"/><path d="M73 48Q76 36 88 33.6Q100 34 105 48Q100 39 89 38.6Q79 39 73 48Z" fill="#3d2e2c"/>
<path d="M77 46.4Q82 44.6 87 46.4M94 46.4Q98.6 44.6 103 46.4" stroke="#4a3430" stroke-width="1.1" fill="none"/><path d="M79 49.4H86M95 49.4H101.6" stroke="#3a2a28" stroke-width="1.7"/>
<path d="M26 102.9L56 82V102.9Z" fill="#eeeeee"/><path d="M0 102.9V96L30 102.9Z" fill="#9a9a9a" opacity=".3"/></g></g></svg>
<!-- tooltip -->
<div class="a" style="left:1148px;top:620px;width:140px;height:50.5px;background:#f3f2f1;border-radius:3.6px;box-shadow:0 1px 4px rgba(0,0,0,.28),0 0 1px rgba(0,0,0,.25)"></div>
<div class="a" style="left:1155.8px;top:625.5px;font-size:10.3px;color:#2c2c2c;line-height:14px;white-space:nowrap;transform-origin:0 50%;transform:scaleX(.925)">25 февраля 2025 г.</div>
<div class="a" style="left:1155.8px;top:653px;font-size:10.3px;color:#2c2c2c;line-height:14px;white-space:nowrap;transform-origin:0 50%;transform:scaleX(.925)">Вт 16:52 (Местное время)</div>
<!-- mute badges -->
<svg class="mb" style="left:1095.3px;top:159.5px"><use href="#mo"/></svg>
<svg class="mb" style="left:1095.3px;top:230px"><use href="#mo"/></svg>
<svg class="mb" style="left:1189.1px;top:230px"><use href="#mo"/></svg>
<svg class="mb" style="left:1189.1px;top:301px"><use href="#mo"/></svg>
<svg class="mb" style="left:1095.3px;top:371.8px"><use href="#mo"/></svg>
<svg class="mb" style="left:1189.1px;top:371.8px"><use href="#mo"/></svg>
<svg class="mb" style="left:1095.3px;top:442px"><use href="#mo"/></svg>
<svg class="mb" style="left:1189.1px;top:442px"><use href="#mo"/></svg>
<svg class="mb" style="left:1095.3px;top:512.6px"><use href="#mo"/></svg>
<svg class="mb" style="left:1189.1px;top:512.6px"><use href="#mo"/></svg>
<svg class="mb" style="left:1097.8px;top:644px"><use href="#mo"/></svg>
<!-- name tag overlay -->
<div class="a" style="left:7px;top:653.5px;width:88px;height:18.5px;border-radius:3.5px;background:rgba(78,78,78,.88)"></div>
<div class="a" style="left:12.2px;top:657px;font-size:9.6px;color:#fff;line-height:13px;white-space:nowrap;transform:scaleX(.93);transform-origin:0 50%">Elşad Sultanov</div>
<svg class="xi" style="left:79.5px;top:657.5px" width="11" height="12" viewBox="0 0 11 12" fill="none" stroke="#fff" stroke-width=".9" stroke-linecap="round"><rect x="3.6" y=".8" width="3.4" height="6" rx="1.7" fill="#fff" stroke="none"/><path d="M2 5.6Q2 8.8 5.3 8.8Q8.6 8.8 8.6 5.6M5.3 9V11M1 .8L10 11.2"/></svg>
<svg class="xi" style="left:955px;top:327.5px" width="14" height="18.5" viewBox="0 0 14 18.5"><path d="M4.4 1.6Q4.4 .4 5.5 .4Q6.6 .4 6.6 1.6V6.4Q6.6 5.4 7.7 5.4Q8.8 5.4 8.8 6.6V7Q8.8 6 9.9 6Q11 6 11 7.2V7.8Q11 6.8 12 6.8Q13.4 6.8 13.4 8.4V12.4Q13.4 16 11.4 18H5.2Q3.6 15.6 .8 11.8Q-.2 10.4 .8 9.8Q1.8 9.2 3 10.4L4.4 12Z" fill="#fff" stroke="#4a4a4a" stroke-width=".9" stroke-linejoin="round"/><path d="M6.6 6.4V9.6M8.8 7V9.6M11 7.8V9.6" stroke="#4a4a4a" stroke-width=".9" fill="none"/></svg>
<div class="a" style="left:0;top:682px;width:1280px;height:5px;background:#f9ecd0;border-top:1px solid #ecd9b0"></div>
</body></html>
